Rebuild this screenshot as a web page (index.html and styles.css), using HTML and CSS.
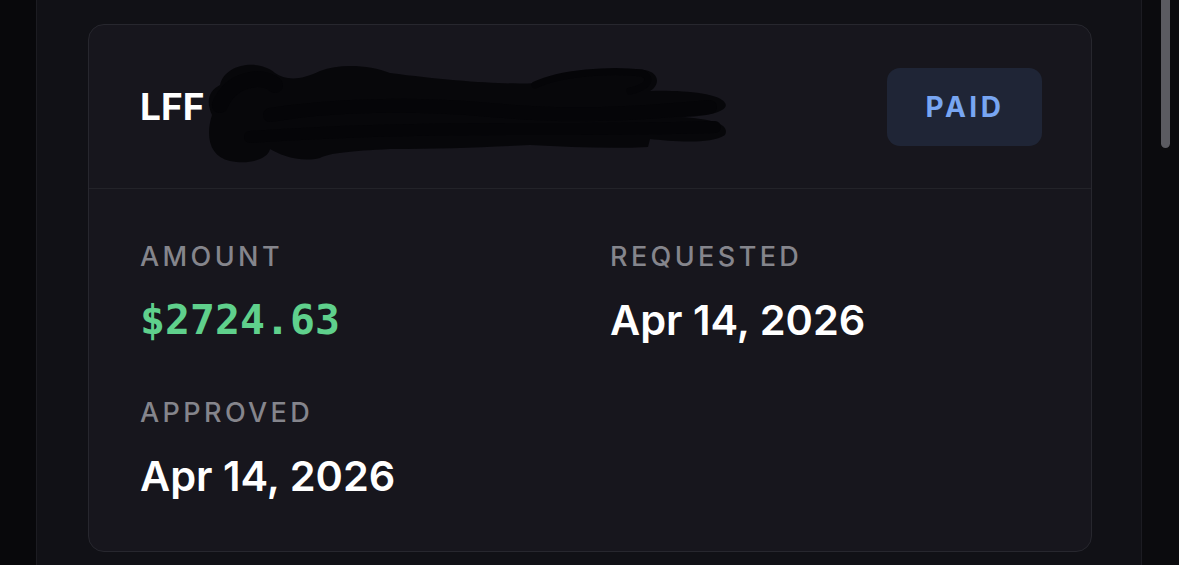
FILE: index.html
```html
<!DOCTYPE html>
<html lang="en">
<head>
<meta charset="utf-8">
<title>Payout</title>
<link rel="stylesheet" href="styles.css">
</head>
<body>
<div class="gutter"></div>
<main class="panel">
  <section class="card">
    <header class="card-head">
      <h2 class="title">LFF</h2>
      <span class="badge">PAID</span>
      <svg class="scribble" viewBox="0 0 550 115" aria-hidden="true">
        <path fill="#07070a" d="M30 30 C35 8 70 4 85 18 C95 25 110 26 130 16 C150 8 180 10 200 18 C260 26 320 30 345 28 C370 15 420 12 455 15 C470 18 470 30 460 36 C490 35 530 38 535 48 C540 55 520 62 490 62 C525 64 540 70 535 80 C520 90 480 86 460 84 L458 92 C420 94 380 92 340 90 C300 92 250 94 200 94 C160 96 140 98 130 103 C110 108 90 100 80 94 C78 104 60 110 40 106 C20 102 15 82 22 60 C15 45 20 35 30 30 Z"/>
        <g fill="none" stroke="#050508" stroke-linecap="round" stroke-linejoin="round">
          <path d="M345 30 C370 18 420 14 452 18 C462 22 460 32 440 36" stroke-width="7"/>
          <path d="M80 60 C140 50 220 48 300 55 S 430 60 520 52" stroke-width="14"/>
          <path d="M60 82 C130 77 230 74 330 74 S 450 74 525 72" stroke-width="12"/>
          <path d="M30 50 C40 25 70 18 85 30" stroke-width="16"/>
        </g>
      </svg>
    </header>
    <div class="card-body">
      <div class="field">
        <div class="label">AMOUNT</div>
        <div class="value money">$2724.63</div>
      </div>
      <div class="field">
        <div class="label">REQUESTED</div>
        <div class="value">Apr 14, 2026</div>
      </div>
      <div class="field">
        <div class="label">APPROVED</div>
        <div class="value">Apr 14, 2026</div>
      </div>
    </div>
  </section>
</main>
<aside class="track"><div class="thumb"></div></aside>
</body>
</html>
```
FILE: styles.css
```css
* { box-sizing: border-box; }
html, body { height: 100%; }
body {
  margin: 0;
  background: #08080b;
  display: flex;
  font-family: Inter, "Noto Sans", sans-serif;
  overflow: hidden;
}
.gutter {
  width: 36px;
  flex: none;
  background: #08080b;
}
.panel {
  width: 1106px;
  flex: none;
  background: #111116;
  border-left: 1px solid #1c1c22;
  border-right: 1px solid #1c1c22;
  padding: 24px 49px 0 51px;
}
.card {
  background: #17161d;
  border: 1px solid #27272e;
  border-radius: 16px;
  height: 528px;
  display: flex;
  flex-direction: column;
}
.card-head {
  position: relative;
  height: 164px;
  flex: none;
  display: flex;
  align-items: center;
  justify-content: space-between;
  padding: 0 49px 0 51px;
  border-bottom: 1px solid #232329;
}
.title {
  margin: 0;
  color: #ffffff;
  font-size: 37px;
  font-weight: 700;
  line-height: normal;
}
.scribble {
  position: absolute;
  left: 101px;
  top: 30px;
  width: 550px;
  height: 115px;
}
.badge {
  width: 155px;
  height: 78px;
  border-radius: 13px;
  background: #1f2536;
  color: #78a6f2;
  font-size: 28px;
  font-weight: 700;
  letter-spacing: 3.5px;
  padding-left: 1px;
  display: flex;
  align-items: center;
  justify-content: center;
}
.card-body {
  display: grid;
  grid-template-columns: 1fr 1fr;
  column-gap: 38px;
  row-gap: 53px;
  padding: 52px 49px 0 51px;
}
.label {
  color: #85858c;
  font-size: 27px;
  font-weight: 500;
  letter-spacing: 3.4px;
  line-height: 32px;
}
.value {
  margin-top: 23px;
  color: #ffffff;
  font-size: 41.5px;
  font-weight: 600;
  line-height: 48px;
}
.money {
  font-family: "DejaVu Sans Mono", "Liberation Mono", monospace;
  font-weight: 700;
  color: #5fd08c;
}
.track {
  flex: 1;
  background: #0b0b0e;
  padding-left: 19px;
}
.thumb {
  width: 9px;
  height: 153px;
  margin-top: -5px;
  border-radius: 5px;
  background: #5b5b61;
}
```
